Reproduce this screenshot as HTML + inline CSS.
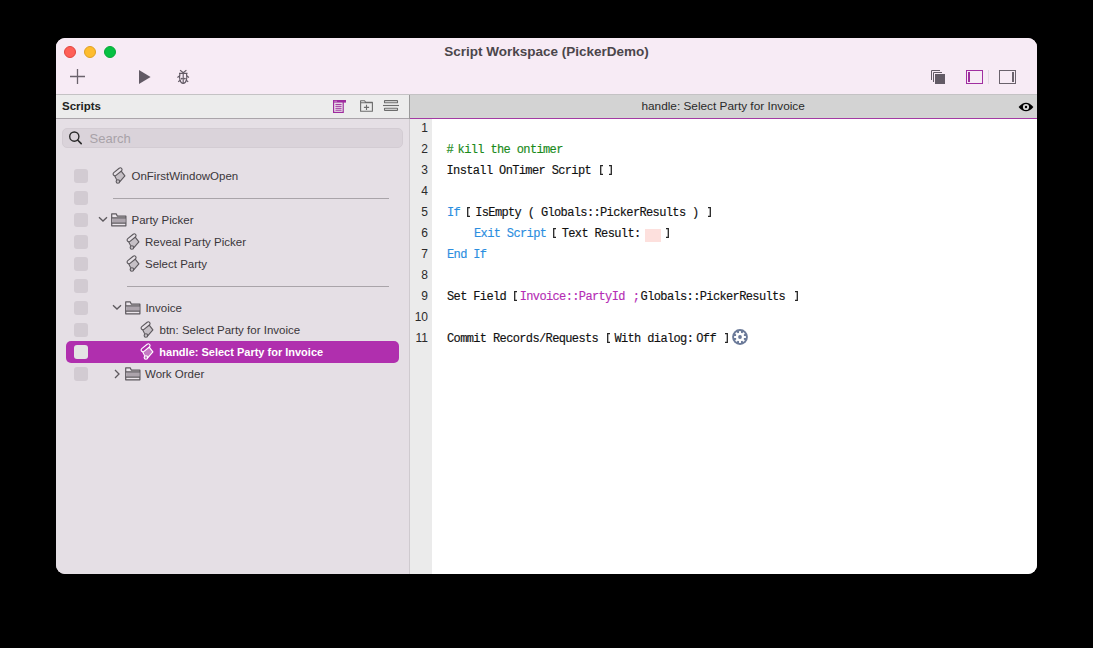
<!DOCTYPE html>
<html><head><meta charset="utf-8">
<style>
*{margin:0;padding:0;box-sizing:border-box}
html,body{width:1093px;height:648px;background:#000;overflow:hidden;font-family:"Liberation Sans",sans-serif}
.a{position:absolute}
#win{position:absolute;left:56px;top:38px;width:981px;height:536px;border-radius:9px;overflow:hidden;background:#e5dfe5}
#tb{left:0;top:0;width:981px;height:57px;background:#f7ebf5;border-bottom:1px solid #c4c2c4}
.dot{width:12px;height:12px;border-radius:50%}
#title{left:0;width:981px;top:5px;text-align:center;font-weight:bold;font-size:13.5px;color:#4b464b;line-height:17px}
#side{left:0;top:57px;width:353px;height:479px;background:#e5dfe5}
#shead{left:0;top:0;width:353px;height:24px;background:#ececec;border-bottom:1px solid #aaa4aa}
#shead .t{left:6px;top:4px;font-weight:bold;font-size:11.5px;color:#222;line-height:14px}
#search{left:6px;top:33px;width:341px;height:20px;border-radius:5px;background:#dad3da;border:1px solid #d3ccd3}
#divider{left:353px;top:57px;width:1px;height:479px;background:#cfcacf}
#divh{left:353px;top:57px;width:1px;height:24px;background:#9a9a9a}
#ed{left:354px;top:57px;width:627px;height:479px;background:#fff}
#ehead{left:0;top:0;width:627px;height:23px;background:#d3d3d3}
#eline{left:0;top:23px;width:627px;height:1px;background:#a33aa3}
#gut{left:0;top:24px;width:22px;height:455px;background:#ebebeb}
.ln{position:absolute;left:410px;width:22px;padding-right:4px;text-align:right;font-size:12px;color:#2a2a2a;line-height:21px}
.cl{position:absolute;left:447px;font-family:"Liberation Mono",monospace;font-size:12px;letter-spacing:-0.63px;color:#111;line-height:21px;white-space:pre;-webkit-text-stroke:0.15px currentColor}
.sn{font-family:"Liberation Sans",sans-serif;font-size:12px;letter-spacing:0}
.blue{color:#2b8ee0}
.mag{color:#b52db5}
.grn{color:#1a8a1a}
.pink{background:#fde0dd}
.cb{left:74px;width:14px;height:14px;border-radius:3px;background:#d2cbd2}
.rt{font-size:11.5px;color:#3a363a;line-height:16px;white-space:nowrap}
.ico{stroke:#6a626c;fill:none}
</style></head><body>
<div id="win">
  <div id="tb" class="a">
    <div class="a dot" style="left:8px;top:8px;background:#fe5f57;border:0.5px solid #e0443e"></div>
    <div class="a dot" style="left:28px;top:8px;background:#febc2e;border:0.5px solid #dea123"></div>
    <div class="a dot" style="left:48px;top:8px;background:#06c143;border:0.5px solid #08a838"></div>
    <div id="title" class="a">Script Workspace (PickerDemo)</div>
  </div>
  <div id="side" class="a">
    <div id="shead" class="a"><div class="a t">Scripts</div></div>
    <div id="search" class="a"></div>
  </div>
  <div id="divider" class="a"></div><div id="divh" class="a"></div>
  <div id="ed" class="a">
    <div id="ehead" class="a"></div>
    <div id="eline" class="a"></div>
    <div id="gut" class="a"></div>
  </div>
</div>
<!-- toolbar icons -->
<svg class="a" style="left:70px;top:69px" width="16" height="16" viewBox="0 0 16 16"><path d="M7.5 0 V15 M0 7.5 H15" stroke="#6a626c" stroke-width="1.3"/></svg>
<svg class="a" style="left:139px;top:70px" width="12" height="14" viewBox="0 0 12 14"><path d="M0 0 L11.6 7 L0 14 Z" fill="#625a65"/></svg>
<svg class="a" style="left:176px;top:69px" width="15" height="16" viewBox="0 0 15 16">
 <g stroke="#625a65" stroke-width="1.15" fill="none">
 <path d="M3.9 4.6 C3.0 8.5, 3.8 14.4, 7.2 14.4 C10.6 14.4, 11.4 8.5, 10.5 4.6"/>
 <path d="M3.0 4.4 H11.5 M7.2 4.4 V14.4 M4.1 1.2 L8.2 4.4 M10.4 1.2 L6.2 4.4 M1.4 8.4 L4.1 6.6 M13.0 8.4 L10.3 6.6 M2.2 12.7 L4.3 11.2 M12.2 12.7 L10.1 11.2"/>
 <path d="M5.2 9.6 H9.3" stroke-width="0.8"/>
 </g>
 <circle cx="5.6" cy="9.6" r="0.85" fill="#625a65"/><circle cx="8.9" cy="9.6" r="0.85" fill="#625a65"/>
</svg>
<svg class="a" style="left:931px;top:70px" width="15" height="14" viewBox="0 0 15 14">
 <path d="M0.5 10 V0.5 H9" fill="none" stroke="#625a65" stroke-width="1"/>
 <path d="M2.5 12 V2.5 H11" fill="none" stroke="#625a65" stroke-width="1"/>
 <rect x="4" y="4" width="10" height="10" fill="#625a65"/>
</svg>
<svg class="a" style="left:966px;top:70px" width="17" height="14" viewBox="0 0 17 14">
 <rect x="0.5" y="0.5" width="16" height="13" fill="none" stroke="#a02ea0" stroke-width="1"/>
 <rect x="2" y="2" width="2" height="10" fill="#a02ea0"/>
</svg>
<div class="a" style="left:988px;top:70px;width:1px;height:14px;background:#e3d9e3"></div>
<svg class="a" style="left:999px;top:70px" width="17" height="14" viewBox="0 0 17 14">
 <rect x="0.5" y="0.5" width="16" height="13" fill="none" stroke="#6a626c" stroke-width="1"/>
 <rect x="13" y="2" width="2" height="10" fill="#6a626c"/>
</svg>
<!-- sidebar header icons -->
<svg class="a" style="left:333px;top:100px" width="14" height="13" viewBox="0 0 14 13">
 <rect x="0" y="0" width="13" height="2.6" fill="#9e2b9e"/>
 <rect x="1" y="0.8" width="3" height="1" fill="#fff"/>
 <rect x="0.6" y="1" width="9.6" height="11.4" fill="none" stroke="#9e2b9e" stroke-width="1.2"/>
 <path d="M2.4 4.4 H8.6 M2.4 6.3 H8.6 M2.4 8.3 H8.6 M2.4 10.2 H8.6" stroke="#9e2b9e" stroke-width="1"/>
</svg>
<svg class="a" style="left:360px;top:100px" width="14" height="13" viewBox="0 0 14 13">
 <path d="M0.6 11.2 V0.8 H4.6 L5.6 2.2 H12.4 V11.2 Z M0.6 2.8 H12.4" fill="none" stroke="#6c6c6c" stroke-width="1.1" stroke-linejoin="round"/>
 <path d="M6.5 4.8 V10 M3.9 7.4 H9.1" stroke="#6c6c6c" stroke-width="1.1"/>
</svg>
<svg class="a" style="left:383px;top:100px" width="16" height="12" viewBox="0 0 16 12">
 <rect x="1.5" y="0.6" width="13" height="2.2" rx="0.4" fill="none" stroke="#6c6c6c" stroke-width="1.1"/>
 <path d="M0 5.5 H16" stroke="#6c6c6c" stroke-width="1.1"/>
 <rect x="1.5" y="8.2" width="13" height="2.2" rx="0.4" fill="none" stroke="#6c6c6c" stroke-width="1.1"/>
</svg>
<!-- search -->
<svg class="a" style="left:68px;top:130px" width="16" height="16" viewBox="0 0 16 16">
 <circle cx="6.3" cy="6.6" r="4.6" fill="none" stroke="#2a2a2a" stroke-width="1.4"/>
 <path d="M9.6 10 L13.2 13.6" stroke="#2a2a2a" stroke-width="1.6" stroke-linecap="round"/>
</svg>
<div class="a" style="left:89.5px;top:130px;font-size:13px;line-height:17px;color:#a8a2a8">Search</div>
<!-- editor header -->
<div class="a" style="left:641.5px;top:98px;font-size:11.8px;line-height:16px;color:#2a2a2a;white-space:nowrap">handle: Select Party for Invoice</div>
<svg class="a" style="left:1018px;top:101px" width="16" height="12" viewBox="0 0 16 12">
 <path d="M0.6 6 Q8 -2.6 15.4 6 Q8 14.6 0.6 6 Z" fill="#000"/>
 <circle cx="8" cy="6" r="3.1" fill="#d3d3d3"/>
 <circle cx="8" cy="6" r="1.2" fill="#000"/>
</svg>
<div class="a" style="left:66px;top:341px;width:333px;height:22px;border-radius:5px;background:#b02fae"></div>
<div class="a cb" style="top:169px;"></div>
<div class="a cb" style="top:191px;"></div>
<div class="a cb" style="top:213px;"></div>
<div class="a cb" style="top:235px;"></div>
<div class="a cb" style="top:257px;"></div>
<div class="a cb" style="top:279px;"></div>
<div class="a cb" style="top:301px;"></div>
<div class="a cb" style="top:323px;"></div>
<div class="a cb" style="top:345px;background:#e4e4e4;"></div>
<div class="a cb" style="top:367px;"></div>
<svg class="a" style="left:108px;top:164px" width="24" height="24" viewBox="0 0 24 24"><path d="M7.9 11.2 L13.0 7.0 L16.8 11.9 L11.2 18.2 L8.9 15.6 Z" fill="#c6c0c6"/><path d="M5.79 8.64 L11.19 4.24 A1.75 1.75 0 0 1 13.41 6.96 L8.01 11.36 A1.75 1.75 0 0 1 5.79 8.64 Z" fill="#e6e0e6" stroke="#5d595e" stroke-width="1.15"/><path d="M13.0 6.9 L16.9 11.9 L11.2 18.3" fill="none" stroke="#5d595e" stroke-width="1.15" stroke-linejoin="round"/><path d="M6.6 11.6 L8.7 15.7" fill="none" stroke="#5d595e" stroke-width="1.15"/><circle cx="9.9" cy="17.5" r="1.75" fill="#c6c0c6" stroke="#5d595e" stroke-width="1.15"/></svg>
<div class="a rt" style="left:131.5px;top:168px;">OnFirstWindowOpen</div>
<div class="a" style="left:113px;top:198px;width:276px;height:1px;background:#a9a4a9"></div>
<svg class="a" style="left:97.5px;top:214px" width="10" height="10" viewBox="0 0 10 10"><path d="M1 3.2 L5 7 L9 3.2" fill="none" stroke="#5d595e" stroke-width="1.3"/></svg>
<svg class="a" style="left:110.5px;top:213px" width="16" height="14" viewBox="0 0 16 14"><path d="M0.7 0.9 H5.2 L6.4 3.2 H14.9 V12.8 H0.7 Z" fill="#ebe5eb" stroke="#5d595e" stroke-width="1.2" stroke-linejoin="round"/><rect x="1.3" y="5.2" width="13" height="4.6" fill="#aca4ac"/><path d="M0.7 4.9 H14.9 M0.7 10.2 H14.9" stroke="#5d595e" stroke-width="1.2"/></svg>
<div class="a rt" style="left:131.5px;top:212px;">Party Picker</div>
<svg class="a" style="left:122px;top:230px" width="24" height="24" viewBox="0 0 24 24"><path d="M7.9 11.2 L13.0 7.0 L16.8 11.9 L11.2 18.2 L8.9 15.6 Z" fill="#c6c0c6"/><path d="M5.79 8.64 L11.19 4.24 A1.75 1.75 0 0 1 13.41 6.96 L8.01 11.36 A1.75 1.75 0 0 1 5.79 8.64 Z" fill="#e6e0e6" stroke="#5d595e" stroke-width="1.15"/><path d="M13.0 6.9 L16.9 11.9 L11.2 18.3" fill="none" stroke="#5d595e" stroke-width="1.15" stroke-linejoin="round"/><path d="M6.6 11.6 L8.7 15.7" fill="none" stroke="#5d595e" stroke-width="1.15"/><circle cx="9.9" cy="17.5" r="1.75" fill="#c6c0c6" stroke="#5d595e" stroke-width="1.15"/></svg>
<div class="a rt" style="left:145px;top:234px;">Reveal Party Picker</div>
<svg class="a" style="left:122px;top:252px" width="24" height="24" viewBox="0 0 24 24"><path d="M7.9 11.2 L13.0 7.0 L16.8 11.9 L11.2 18.2 L8.9 15.6 Z" fill="#c6c0c6"/><path d="M5.79 8.64 L11.19 4.24 A1.75 1.75 0 0 1 13.41 6.96 L8.01 11.36 A1.75 1.75 0 0 1 5.79 8.64 Z" fill="#e6e0e6" stroke="#5d595e" stroke-width="1.15"/><path d="M13.0 6.9 L16.9 11.9 L11.2 18.3" fill="none" stroke="#5d595e" stroke-width="1.15" stroke-linejoin="round"/><path d="M6.6 11.6 L8.7 15.7" fill="none" stroke="#5d595e" stroke-width="1.15"/><circle cx="9.9" cy="17.5" r="1.75" fill="#c6c0c6" stroke="#5d595e" stroke-width="1.15"/></svg>
<div class="a rt" style="left:145px;top:256px;">Select Party</div>
<div class="a" style="left:127px;top:286px;width:262px;height:1px;background:#a9a4a9"></div>
<svg class="a" style="left:111.5px;top:302px" width="10" height="10" viewBox="0 0 10 10"><path d="M1 3.2 L5 7 L9 3.2" fill="none" stroke="#5d595e" stroke-width="1.3"/></svg>
<svg class="a" style="left:124.5px;top:301px" width="16" height="14" viewBox="0 0 16 14"><path d="M0.7 0.9 H5.2 L6.4 3.2 H14.9 V12.8 H0.7 Z" fill="#ebe5eb" stroke="#5d595e" stroke-width="1.2" stroke-linejoin="round"/><rect x="1.3" y="5.2" width="13" height="4.6" fill="#aca4ac"/><path d="M0.7 4.9 H14.9 M0.7 10.2 H14.9" stroke="#5d595e" stroke-width="1.2"/></svg>
<div class="a rt" style="left:145.4px;top:300px;">Invoice</div>
<svg class="a" style="left:136px;top:318px" width="24" height="24" viewBox="0 0 24 24"><path d="M7.9 11.2 L13.0 7.0 L16.8 11.9 L11.2 18.2 L8.9 15.6 Z" fill="#c6c0c6"/><path d="M5.79 8.64 L11.19 4.24 A1.75 1.75 0 0 1 13.41 6.96 L8.01 11.36 A1.75 1.75 0 0 1 5.79 8.64 Z" fill="#e6e0e6" stroke="#5d595e" stroke-width="1.15"/><path d="M13.0 6.9 L16.9 11.9 L11.2 18.3" fill="none" stroke="#5d595e" stroke-width="1.15" stroke-linejoin="round"/><path d="M6.6 11.6 L8.7 15.7" fill="none" stroke="#5d595e" stroke-width="1.15"/><circle cx="9.9" cy="17.5" r="1.75" fill="#c6c0c6" stroke="#5d595e" stroke-width="1.15"/></svg>
<div class="a rt" style="left:159.5px;top:322px;">btn: Select Party for Invoice</div>
<svg class="a" style="left:136px;top:340px" width="24" height="24" viewBox="0 0 24 24"><path d="M7.9 11.2 L13.0 7.0 L16.8 11.9 L11.2 18.2 L8.9 15.6 Z" fill="#c57ac3"/><path d="M5.79 8.64 L11.19 4.24 A1.75 1.75 0 0 1 13.41 6.96 L8.01 11.36 A1.75 1.75 0 0 1 5.79 8.64 Z" fill="#b02fae" stroke="#fff" stroke-width="1.15"/><path d="M13.0 6.9 L16.9 11.9 L11.2 18.3" fill="none" stroke="#fff" stroke-width="1.15" stroke-linejoin="round"/><path d="M6.6 11.6 L8.7 15.7" fill="none" stroke="#fff" stroke-width="1.15"/><circle cx="9.9" cy="17.5" r="1.75" fill="#c57ac3" stroke="#fff" stroke-width="1.15"/></svg>
<div class="a rt" style="left:159.3px;top:344px;color:#fff;font-weight:bold;font-size:11px;">handle: Select Party for Invoice</div>
<svg class="a" style="left:111.5px;top:369px" width="10" height="10" viewBox="0 0 10 10"><path d="M3 1 L7 5 L3 9" fill="none" stroke="#5d595e" stroke-width="1.3"/></svg>
<svg class="a" style="left:124.5px;top:367px" width="16" height="14" viewBox="0 0 16 14"><path d="M0.7 0.9 H5.2 L6.4 3.2 H14.9 V12.8 H0.7 Z" fill="#ebe5eb" stroke="#5d595e" stroke-width="1.2" stroke-linejoin="round"/><rect x="1.3" y="5.2" width="13" height="4.6" fill="#aca4ac"/><path d="M0.7 4.9 H14.9 M0.7 10.2 H14.9" stroke="#5d595e" stroke-width="1.2"/></svg>
<div class="a rt" style="left:145px;top:366px;">Work Order</div>
<div class="ln" style="top:118px">1</div>
<div class="ln" style="top:139px">2</div>
<div class="ln" style="top:160px">3</div>
<div class="ln" style="top:181px">4</div>
<div class="ln" style="top:202px">5</div>
<div class="ln" style="top:223px">6</div>
<div class="ln" style="top:244px">7</div>
<div class="ln" style="top:265px">8</div>
<div class="ln" style="top:286px">9</div>
<div class="ln" style="top:307px">10</div>
<div class="ln" style="top:328px">11</div>
<div class="cl grn" style="left:446.5px;top:140px">#</div>
<div class="cl grn" style="left:457.6px;top:140px">kill the ontimer</div>
<div class="cl" style="left:446.5px;top:161px">Install OnTimer Script</div>
<svg class="a" style="left:600px;top:165px" width="3" height="10" viewBox="0 0 3 10"><path d="M3 0.65 H0.7 V9.35 H3" fill="none" stroke="#262626" stroke-width="1.3"/></svg>
<svg class="a" style="left:609px;top:165px" width="3" height="10" viewBox="0 0 3 10"><path d="M0 0.65 H2.3 V9.35 H0" fill="none" stroke="#262626" stroke-width="1.3"/></svg>
<div class="cl blue" style="left:447px;top:203px">If</div>
<svg class="a" style="left:467px;top:207px" width="3" height="10" viewBox="0 0 3 10"><path d="M3 0.65 H0.7 V9.35 H3" fill="none" stroke="#262626" stroke-width="1.3"/></svg>
<div class="cl" style="left:475.2px;top:203px">IsEmpty ( Globals::PickerResults )</div>
<svg class="a" style="left:708px;top:207px" width="3" height="10" viewBox="0 0 3 10"><path d="M0 0.65 H2.3 V9.35 H0" fill="none" stroke="#262626" stroke-width="1.3"/></svg>
<div class="cl blue" style="left:474px;top:224px">Exit Script</div>
<svg class="a" style="left:553px;top:228px" width="3" height="10" viewBox="0 0 3 10"><path d="M3 0.65 H0.7 V9.35 H3" fill="none" stroke="#262626" stroke-width="1.3"/></svg>
<div class="cl" style="left:561.7px;top:224px">Text Result:</div>
<svg class="a" style="left:665.5px;top:228px" width="3" height="10" viewBox="0 0 3 10"><path d="M0 0.65 H2.3 V9.35 H0" fill="none" stroke="#262626" stroke-width="1.3"/></svg>
<div class="a pink" style="left:645px;top:229px;width:16px;height:13px"></div>
<div class="cl blue" style="left:447px;top:245px">End If</div>
<div class="cl" style="left:447px;top:287px">Set Field</div>
<svg class="a" style="left:513.5px;top:291px" width="3" height="10" viewBox="0 0 3 10"><path d="M3 0.65 H0.7 V9.35 H3" fill="none" stroke="#262626" stroke-width="1.3"/></svg>
<div class="cl mag" style="left:519.7px;top:287px">Invoice::PartyId</div>
<div class="cl mag" style="left:632.8px;top:287px">;</div>
<div class="cl" style="left:640.6px;top:287px">Globals::PickerResults</div>
<svg class="a" style="left:794.8px;top:291px" width="3" height="10" viewBox="0 0 3 10"><path d="M0 0.65 H2.3 V9.35 H0" fill="none" stroke="#262626" stroke-width="1.3"/></svg>
<div class="cl" style="left:447px;top:329px">Commit Records/Requests</div>
<svg class="a" style="left:607px;top:333px" width="3" height="10" viewBox="0 0 3 10"><path d="M3 0.65 H0.7 V9.35 H3" fill="none" stroke="#262626" stroke-width="1.3"/></svg>
<div class="cl" style="left:614.4px;top:329px">With dialog:</div>
<div class="cl" style="left:696.3px;top:329px">Off</div>
<svg class="a" style="left:724.8px;top:333px" width="3" height="10" viewBox="0 0 3 10"><path d="M0 0.65 H2.3 V9.35 H0" fill="none" stroke="#262626" stroke-width="1.3"/></svg>
<!-- gear -->
<svg class="a" style="left:732px;top:329px" width="16" height="16" viewBox="0 0 16 16">
 <circle cx="8" cy="8" r="7.9" fill="#6b7a99"/>
 <g fill="#fff">
  <circle cx="8" cy="8" r="4.2"/>
  <rect x="7" y="2.1" width="2" height="11.8" rx="0.3"/>
  <rect x="7" y="2.1" width="2" height="11.8" rx="0.3" transform="rotate(45 8 8)"/>
  <rect x="7" y="2.1" width="2" height="11.8" rx="0.3" transform="rotate(90 8 8)"/>
  <rect x="7" y="2.1" width="2" height="11.8" rx="0.3" transform="rotate(135 8 8)"/>
 </g>
 <circle cx="8" cy="8" r="1.9" fill="#6b7a99"/>
</svg>
</body></html>
